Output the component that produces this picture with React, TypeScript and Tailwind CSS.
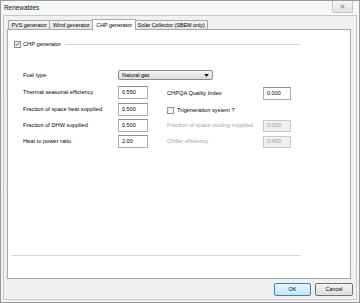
import { useState } from 'react'

const tabs = ['PVS generator', 'Wind generator', 'CHP generator', 'Solar Collector (SBEM only)']

function CheckBox({ checked }: { checked: boolean }) {
  return (
    <span className="flex h-[7px] w-[7px] items-center justify-center border border-[#8f8f8f] bg-gradient-to-br from-[#e6e6e6] to-white">
      {checked && (
        <svg viewBox="0 0 8 8" className="h-[6px] w-[6px]">
          <path d="M1.2 4.2 L3.2 6.2 L6.8 1.6" fill="none" stroke="#2a4c9a" strokeWidth="1.4" />
        </svg>
      )}
    </span>
  )
}

function Field({ value, disabled }: { value: string; disabled?: boolean }) {
  return (
    <div
      className={
        disabled
          ? 'flex h-[12px] items-center border border-[#c9c9c9] bg-[#f0f0f0] pl-[3px] text-[5.5px] text-[#9a9a9a]'
          : 'flex h-[13px] items-center border border-[#abadb3] border-t-[#8e8f8f] bg-white pl-[3px] text-[5.5px] text-black'
      }
    >
      {value}
    </div>
  )
}

export default function App() {
  const [active] = useState(2)
  return (
    <div className="flex h-[303px] w-[360px] flex-col border border-[#9a9a9a] bg-gradient-to-b from-[#f6f7f9] to-[#eef0f3] font-['Liberation_Sans',Arial,sans-serif] text-black">
      {/* title bar */}
      <div className="flex h-[14px] items-start justify-between pl-[3px] pr-[6px]">
        <span className="mt-[3px] text-[6.4px] leading-[8px] text-[#111]">Renewables</span>
        <div className="flex h-[12px] w-[21px] items-center justify-center rounded-b-[2px] border border-t-0 border-[#c4c4c4] bg-gradient-to-b from-[#f7f7f7] to-[#e3e3e3]">
          <svg viewBox="0 0 8 8" className="h-[5px] w-[5px]">
            <path d="M1 1 L7 7 M7 1 L1 7" stroke="#9c9c9c" strokeWidth="1.8" />
          </svg>
        </div>
      </div>

      {/* client */}
      <div className="mx-[2px] mb-[2px] flex flex-1 flex-col border border-[#c7c7c7] bg-[#f0f0f0]">
        <div className="flex h-[13px] items-end pl-[4px]">
          {tabs.map((t, i) =>
            i === active ? (
              <div
                key={t}
                className="relative z-10 -mx-[1px] -mb-[1px] flex h-[11px] items-center border border-b-0 border-[#a9a9a9] bg-white px-[3px] text-[5.4px] text-black"
              >
                {t}
              </div>
            ) : (
              <div
                key={t}
                className="-ml-[1px] flex h-[9px] items-center border border-b-0 border-[#a9a9a9] bg-gradient-to-b from-[#f6f6f6] to-[#e2e2e2] px-[2.5px] text-[5.4px] text-black first:ml-0"
              >
                {t}
              </div>
            )
          )}
        </div>

        <div className="ml-[3px] mr-[5px] flex h-[250px] flex-col border border-[#a9a9a9] bg-white">
          <div className="ml-[4px] mt-[10px] w-[288px]">
            <div className="flex h-[8px] items-center">
              <span className="ml-[2px]">
                <CheckBox checked />
              </span>
              <span className="ml-[2px] text-[5.7px]">CHP generator</span>
              <div className="ml-[4px] h-px flex-1 bg-[#d5d5d5]" />
            </div>

            <div className="mt-[22px] grid grid-cols-[95px_49px_96px_28px] items-center gap-y-[3px] pl-[11px] text-[5.7px]">
              <span>Fuel type</span>
              <div className="col-span-3 flex h-[10px] w-[95px] items-center justify-between rounded-[2px] border border-[#8a8a8a] bg-gradient-to-b from-[#f4f4f4] to-[#dcdcdc] pl-[3px] pr-[3px] text-[5.4px]">
                <span>Natural gas</span>
                <svg viewBox="0 0 6 4" className="h-[3px] w-[5px]">
                  <path d="M0 0 H6 L3 4 Z" fill="#111" />
                </svg>
              </div>

              <span className="mt-[1px]">Thermal seasonal efficiency</span>
              <div className="mt-[1px] w-[30px]">
                <Field value="0.550" />
              </div>
              <span className="mt-[4px]">CHPQA Quality Index</span>
              <div className="mt-[4px]">
                <Field value="0.000" />
              </div>

              <span>Fraction of space heat supplied</span>
              <div className="w-[30px]">
                <Field value="0.500" />
              </div>
              <div className="col-span-2 flex h-[13px] items-center pt-[2px]">
                <CheckBox checked={false} />
                <span className="ml-[3px]">Trigeneration system ?</span>
              </div>

              <span>Fraction of DHW supplied</span>
              <div className="w-[30px]">
                <Field value="0.500" />
              </div>
              <span className="text-[#a5a5a5]">Fraction of space cooling supplied</span>
              <Field value="0.000" disabled />

              <span>Heat to power ratio</span>
              <div className="w-[30px]">
                <Field value="2.00" />
              </div>
              <span className="text-[#a5a5a5]">Chiller efficiency</span>
              <Field value="0.450" disabled />
            </div>

            <div className="mt-[107px] h-px bg-[#d5d5d5]" />
          </div>
        </div>

        <div className="flex flex-1 items-center justify-end gap-[4px] pr-[3px]">
          <button className="flex h-[13px] w-[37px] items-center justify-center rounded-[2px] border border-[#3c7fb1] bg-gradient-to-b from-[#eaf6fd] to-[#bee6fd] text-[5.4px] text-black">
            OK
          </button>
          <button className="flex h-[13px] w-[38px] items-center justify-center rounded-[2px] border border-[#707070] bg-gradient-to-b from-[#f2f2f2] to-[#dddddd] text-[5.4px] text-black">
            Cancel
          </button>
        </div>
      </div>
    </div>
  )
}
